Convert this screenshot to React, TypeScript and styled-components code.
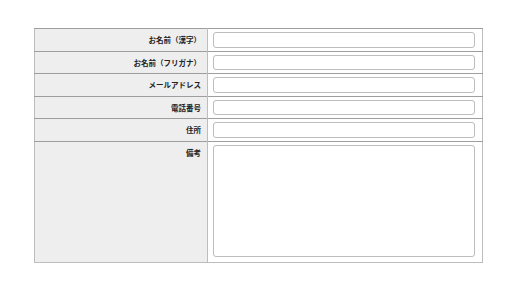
import React from "react";
import styled, { createGlobalStyle } from "styled-components";

const GlobalStyle = createGlobalStyle`
  html, body {
    margin: 0;
    padding: 0;
    background: #fff;
  }
  body {
    font-family: "Noto Sans CJK JP", "DejaVu Sans", sans-serif;
  }
`;

const fields = [
  { label: "お名前（漢字）", name: "name" },
  { label: "お名前（フリガナ）", name: "kana" },
  { label: "メールアドレス", name: "email" },
  { label: "電話番号", name: "tel" },
  { label: "住所", name: "address" },
];

const App: React.FC = () => {
  return (
    <Page>
      <GlobalStyle />
      <FormTable>
        <tbody>
          {fields.map((f) => (
            <Row key={f.name}>
              <Label>{f.label}</Label>
              <Field>
                <TextInput type="text" name={f.name} />
              </Field>
            </Row>
          ))}
          <Row>
            <Label>備考</Label>
            <Field $tall>
              <TextArea name="note" />
            </Field>
          </Row>
        </tbody>
      </FormTable>
    </Page>
  );
};

export default App;

const Page = styled.div`
  ${{
    width: "517px",
    height: "291px",
    paddingTop: "28px",
    boxSizing: "border-box",
    display: "flex",
    justifyContent: "center",
    alignItems: "flex-start"
  }}
`;

const FormTable = styled.table`
  ${{
    width: "449px",
    borderCollapse: "collapse",
    border: "1px solid #bdbdbd"
  }}
`;

const Row = styled.tr``;

const Label = styled.th`
  ${{
    width: "160px",
    background: "#eeeeee",
    borderTop: "1px solid #9e9e9e",
    borderRight: "1px solid #bdbdbd",
    padding: "3px 6px 3px 6px",
    textAlign: "right",
    verticalAlign: "top",
    fontSize: "7.5px",
    lineHeight: "15.5px",
    fontWeight: 700,
    color: "#222",
    whiteSpace: "nowrap"
  }}
`;

const Field = styled.td<{ $tall?: boolean }>`
  ${{
    borderTop: "1px solid #9e9e9e",
    padding: "3px 7px 3px 5px",
    verticalAlign: "top",
    background: "#fff"
  }}
  padding-bottom: ${(p) => (p.$tall ? "5px" : "3px")};
`;

const TextInput = styled.input`
  ${{
    display: "block",
    width: "100%",
    height: "15.5px",
    boxSizing: "border-box",
    border: "1px solid #bdbdbd",
    borderRadius: "3px",
    padding: "0 4px",
    margin: 0,
    fontSize: "8px",
    background: "#fff",
    outline: "none"
  }}
`;

const TextArea = styled.textarea`
  ${{
    display: "block",
    width: "100%",
    height: "112px",
    boxSizing: "border-box",
    border: "1px solid #bdbdbd",
    borderRadius: "3px",
    padding: "2px 4px",
    margin: 0,
    fontSize: "8px",
    resize: "none",
    background: "#fff",
    outline: "none"
  }}
`;
